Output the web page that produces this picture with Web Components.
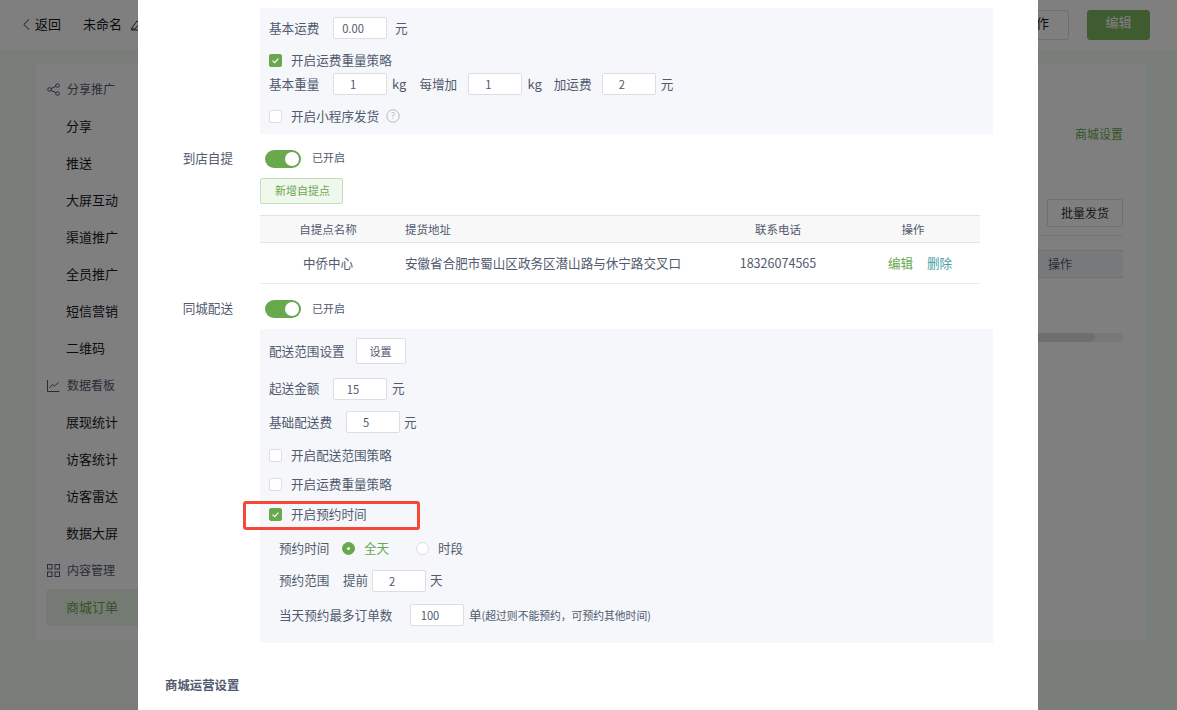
<!DOCTYPE html>
<html lang="zh"><head><meta charset="utf-8"><title>商城订单</title>
<style>
html,body{margin:0;padding:0;height:100%;overflow:hidden}
body{font:13px/1.4 "Noto Sans CJK SC","Noto Sans",sans-serif;color:#333;background:#fff}
</style></head><body>
<app-shell></app-shell>
<script>
const def=(name,css,html)=>{
  customElements.define(name,class extends HTMLElement{
    constructor(){super();const s=this.attachShadow({mode:'open'});s.innerHTML=`<style>${css}</style>`+(typeof html==='function'?html(this):html);}
  });
};

/* ---- primitives ---- */
def('x-check',`
:host{display:flex;align-items:center;height:13px;font-size:12.6px;color:#515a6e;line-height:13px}
.b{width:13px;height:13px;box-sizing:border-box;border:1px solid #dcdee2;border-radius:2px;background:#fff;margin-right:9px;flex:none;display:flex}
:host([on]) .b{background:#69a94e;border-color:#69a94e}
svg{display:none;width:11px;height:11px}
:host([on]) svg{display:block}
.t{display:flex;align-items:center;position:relative;top:-1px}
`,`<span class="b"><svg viewBox="0 0 11 11"><path d="M2.6 5.6 4.7 7.6 8.4 3.6" fill="none" stroke="#fff" stroke-width="1.2"/></svg></span><span class="t"><slot></slot></span>`);

def('x-input',`
:host{display:inline-flex;box-sizing:border-box;width:54px;height:22px;background:#fff;border:1px solid #dcdee2;border-radius:2px;align-items:center;justify-content:center;padding-right:14px;font-size:11.2px;color:#515a6e;flex:none;line-height:20px}
`,`<slot></slot>`);

def('x-toggle',`
:host{display:flex;align-items:center;font-size:11px;color:#515a6e}
.t{width:36px;height:18px;border-radius:9px;background:#69a94e;position:relative;margin:0 11px 0 0;flex:none}
.t::after{content:"";position:absolute;width:14px;height:14px;border-radius:50%;background:#fff;right:2px;top:2px}
.s{position:relative;top:-1px}
:host([low]) .s{top:0}
`,`<span class="t"></span><span class="s"><slot></slot></span>`);

def('x-row',`
:host{display:flex;align-items:center;font-size:12.6px;color:#515a6e;line-height:22px;white-space:nowrap}
`,`<slot></slot>`);

def('x-panel',`
:host{display:block;background:#f5f7fb;width:733px;box-sizing:border-box;padding:9px 9px 0}
`,`<slot></slot>`);

def('x-radio',`
:host{display:inline-flex;align-items:center;font-size:12.6px;color:#515a6e}
.r{width:13px;height:13px;box-sizing:border-box;border-radius:50%;border:1px solid #dcdee2;background:#fff;margin-right:9px;display:flex;align-items:center;justify-content:center}
:host([on]) .r{background:#69a94e;border-color:#69a94e}
:host([on]) .r::after{content:"";width:3px;height:3px;border-radius:50%;background:#fff}
:host([on]){color:#69a94e}
`,`<span class="r"></span><slot></slot>`);

def('x-side-group',`
:host{display:flex;align-items:center;height:37px;color:#515a6e;font-size:12px;padding-left:1px}
.i{width:13px;height:13px;margin-right:7px;display:flex}
svg{width:13px;height:13px}
`,el=>`<span class="i"><svg viewBox="0 0 13 13" fill="none" stroke="#515a6e" stroke-width="1">${el.getAttribute('icon')}</svg></span><slot></slot>`);

def('x-side-item',`
:host{display:flex;align-items:center;height:37px;padding-left:20px;border-radius:4px;font-size:13px;color:#17191e}
:host([active]){background:#edf5e9;color:#69a94e}
`,`<slot></slot>`);

/* ---- page behind the dialog ---- */
def('app-header',`
:host{display:flex;align-items:center;height:50px;background:#fff;box-sizing:border-box;padding:0 27px 0 21px;font-size:13px;color:#17191e}
.back{display:flex;align-items:center;gap:3px;margin-right:22px;position:relative;top:-1px}
.name{display:flex;align-items:center;gap:8px;position:relative;top:-1px}
.sp{flex:1}
.btn{height:30px;box-sizing:border-box;border:1px solid #dcdee2;border-radius:3px;display:flex;align-items:center;justify-content:center;padding:0 19px 3px 12px}
.pri{width:63px;background:#7cb85f;border-color:#7cb85f;color:#fff;margin-left:18px;padding:0 0 5px}
`,`<span class="back"><svg width="11" height="13" viewBox="0 0 11 13" fill="none" stroke="#333"><path d="M8 1.5 2.8 6.5 8 11.5"/></svg>返回</span>
<span class="name">未命名<svg width="13" height="13" viewBox="0 0 13 13" fill="none" stroke="#333"><path d="M1 11 7 3l3 2-5 6zM1 12h11"/></svg></span>
<span class="sp"></span><span class="btn">批量操作</span><span class="btn pri">编辑</span>`);

def('app-sidebar',`
:host{display:block;width:102px;padding:7px 0 13px 10px;flex:none}
`,`<x-side-group icon='<circle cx="2.5" cy="6.5" r="1.8"/><circle cx="10.5" cy="2.5" r="1.8"/><circle cx="10.5" cy="10.5" r="1.8"/><path d="M4 5.6 9 3.3M4 7.4l5 2.3"/>'>分享推广</x-side-group>
<x-side-item>分享</x-side-item><x-side-item>推送</x-side-item><x-side-item>大屏互动</x-side-item><x-side-item>渠道推广</x-side-item><x-side-item>全员推广</x-side-item><x-side-item>短信营销</x-side-item><x-side-item>二维码</x-side-item>
<x-side-group icon='<path d="M.5 1v11.5h12M2.5 9l3-3.5 2 1.5 4-3.5"/>'>数据看板</x-side-group>
<x-side-item>展现统计</x-side-item><x-side-item>访客统计</x-side-item><x-side-item>访客雷达</x-side-item><x-side-item>数据大屏</x-side-item>
<x-side-group icon='<rect x=".5" y=".5" width="4.5" height="4.5"/><rect x="8" y=".5" width="4.5" height="4.5"/><rect x=".5" y="8" width="4.5" height="4.5"/><rect x="8" y="8" width="4.5" height="4.5"/>'>内容管理</x-side-group>
<x-side-item active>商城订单</x-side-item>`);

def('app-content',`
:host{display:flex;flex-direction:column;flex:1;align-items:flex-end;padding:60px 23px 0 0;font-size:12px;color:#515a6e}
.link{color:#69a94e;height:20px;line-height:20px}
.bb{margin-top:55px;width:76px;height:28px;box-sizing:border-box;border:1px solid #dcdee2;border-radius:2px;display:flex;align-items:center;justify-content:center;font-size:12px;color:#333}
.ln{width:100%;height:1px;background:#e8eaec;margin-top:8px}
.th{margin-top:14px;width:100%;height:28px;background:#f0f2f6;border-top:1px solid #e1e4ea;border-bottom:1px solid #e1e4ea;box-sizing:border-box;display:flex;align-items:center;padding-left:400px;justify-content:flex-end}
.th span{width:75px}
.sb{margin-top:55px;width:100%;height:9px;background:#f0f0f0;border-radius:5px;overflow:hidden;display:flex}
.sb i{display:block;width:calc(100% - 28px);background:#dcdcdc;border-radius:5px}
`,`<span class="link">商城设置</span><span class="bb">批量发货</span><span class="ln"></span><div class="th"><span>操作</span></div><div class="sb"><i></i></div>`);

/* ---- dialog ---- */
def('pickup-table',`
:host{display:block;width:720px;font-size:11.5px;color:#515a6e}
.r{display:grid;grid-template-columns:136px 314px 136px 134px;align-items:center}
.h{height:28px;background:#f8f8f9;border-top:1px solid #e2e4e9;border-bottom:1px solid #e2e4e9;box-sizing:border-box}
.b{height:41px;border-bottom:1px solid #e8eaec;box-sizing:border-box;font-size:12.55px}
.c{text-align:center}.l{padding-left:9px}
.g{color:#69a94e;margin-right:14px}.bl{color:#4a9da6}
.ops{padding-left:14px}
`,`<div class="r h"><span class="c">自提点名称</span><span class="l">提货地址</span><span class="c">联系电话</span><span class="c">操作</span></div>
<div class="r b"><span class="c">中侨中心</span><span class="l">安徽省合肥市蜀山区政务区潜山路与休宁路交叉口</span><span class="c">18326074565</span><span class="c ops"><span class="g">编辑</span><span class="bl">删除</span></span></div>`);

def('app-dialog',`
:host{position:absolute;top:0;left:138px;width:900px;height:710px;background:#fff;overflow:hidden;display:block;color:#515a6e;font-size:12.6px}
.wrap{padding:8px 0 0 122px;position:relative;display:flex;flex-direction:column}
.sec{display:flex;margin-left:-122px;align-items:center;height:18px}
.sec .lb{width:95px;text-align:right;margin-right:32px;position:relative;top:-1px}
.add{width:83px;height:26px;box-sizing:border-box;background:#f0f7ec;border:1px solid #c3dfb6;border-radius:2px;color:#69a94e;font-size:11px;display:flex;align-items:center;justify-content:center;padding-left:2px;margin-top:10px;margin-bottom:11px}
.set{width:50px;height:26px;box-sizing:border-box;background:#fff;border:1px solid #dcdee2;border-radius:2px;display:flex;align-items:center;justify-content:center;font-size:11px;margin-left:11px}
.help{width:14px;height:14px;margin-left:7px;flex:none}
.note{font-size:10.8px}
.title{margin:34px 0 0 -95px;font-weight:700;font-size:12.4px;color:#515a6e}
.mark{position:absolute;left:105px;top:501px;width:177px;height:29px;box-sizing:border-box;border:3px solid #f5483b;border-radius:3px}
.up{position:relative;top:-1px}
`,`<div class="wrap">
<x-panel style="height:126px">
  <x-row><span style="width:64px">基本运费</span><x-input>0.00</x-input><span style="margin-left:8px">元</span></x-row>
  <x-check on style="margin-top:15px">开启运费重量策略</x-check>
  <x-row style="margin-top:6px"><span style="width:64px">基本重量</span><x-input>1</x-input><span style="margin:0 13px 0 5px;font-size:13px">kg</span><span style="width:49px">每增加</span><x-input>1</x-input><span style="margin:0 12px 0 5px;font-size:13px">kg</span><span style="width:48px">加运费</span><x-input>2</x-input><span style="margin-left:5px">元</span></x-row>
  <x-check style="margin-top:15px">开启小程序发货<svg class="help" viewBox="0 0 14 14" fill="none" stroke="#b5b8bd"><circle cx="7" cy="7" r="6.2"/><text x="7" y="10.2" text-anchor="middle" font-size="9" fill="#b5b8bd" stroke="none" font-family="Noto Sans">?</text></svg></x-check>
</x-panel>
<div class="sec" style="margin-top:16px"><span class="lb">到店自提</span><x-toggle>已开启</x-toggle></div>
<span class="add">新增自提点</span>
<pickup-table></pickup-table>
<div class="sec" style="margin-top:16px"><span class="lb">同城配送</span><x-toggle low>已开启</x-toggle></div>
<x-panel style="height:314px;margin-top:11px">
  <x-row style="height:26px"><span>配送范围设置</span><span class="set">设置</span></x-row>
  <x-row style="margin-top:14px"><span class="up" style="width:64px">起送金额</span><x-input>15</x-input><span class="up" style="margin-left:5px">元</span></x-row>
  <x-row style="margin-top:11px"><span style="width:77px">基础配送费</span><x-input>5</x-input><span style="margin-left:4px">元</span></x-row>
  <x-check style="margin-top:16px">开启配送范围策略</x-check>
  <x-check style="margin-top:16px">开启运费重量策略</x-check>
  <x-check on style="margin-top:17px">开启预约时间</x-check>
  <x-row style="margin-top:16px;padding-left:10px"><span style="width:63px">预约时间</span><x-radio on style="width:74px">全天</x-radio><x-radio>时段</x-radio></x-row>
  <x-row style="margin-top:11px;padding-left:10px"><span class="up" style="width:64px">预约范围</span><span class="up" style="width:29px">提前</span><x-input>2</x-input><span class="up" style="margin-left:4px">天</span></x-row>
  <x-row style="margin-top:12px;padding-left:10px"><span style="width:131px">当天预约最多订单数</span><x-input>100</x-input><span style="margin-left:5px">单</span><span class="note">(超过则不能预约，可预约其他时间)</span></x-row>
</x-panel>
<div class="title">商城运营设置</div>
<div class="mark"></div>
</div>`);

def('app-shell',`
:host{display:block;position:relative;width:1177px;height:710px;overflow:hidden;background:linear-gradient(90deg,#f3f8f2,#f5fcf4)}
.main{padding:14px 31px 0 36px}
.card{display:flex;background:#fff;border-radius:3px;height:576px}
.mask{position:absolute;inset:0;background:rgba(0,0,0,.5)}
`,`<app-header></app-header><div class="main"><div class="card"><app-sidebar></app-sidebar><app-content></app-content></div></div><div class="mask"></div><app-dialog></app-dialog>`);
</script>
</body></html>
